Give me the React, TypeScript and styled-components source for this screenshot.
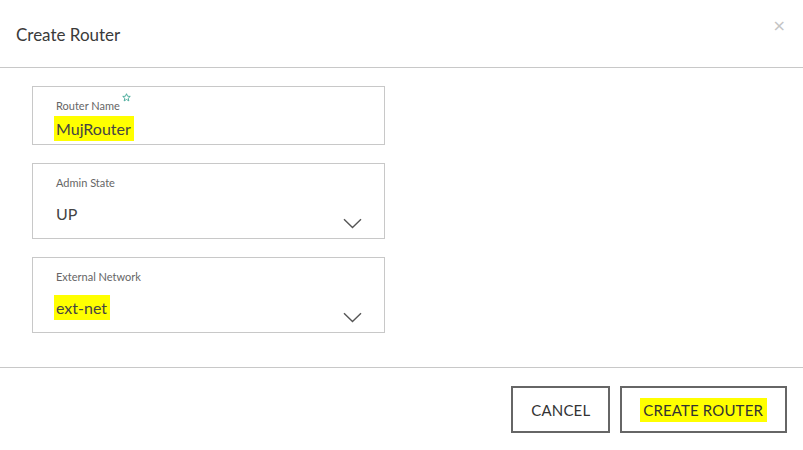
import styled, { createGlobalStyle } from 'styled-components';

const GlobalStyle = createGlobalStyle`
  html, body {
    margin: 0;
    padding: 0;
    background: #ffffff;
  }
  body {
    font-family: 'Lato', 'Open Sans', 'Liberation Sans', sans-serif;
    color: #333333;
  }
`;

interface FieldProps {
  label: string;
  value: string;
  required?: boolean;
  select?: boolean;
  marked?: boolean;
}

const Chevron = () => (
  <svg width="19" height="11" viewBox="0 0 19 11" fill="none">
    <path d="M1 1.2 L9.5 9.5 L18 1.2" stroke="#555" strokeWidth="1.4" />
  </svg>
);

const Star = () => (
  <svg width="9" height="9" viewBox="0 0 10 10" fill="none">
    <path
      d="M5 0.8 L6.2 3.6 L9.2 3.8 L6.9 5.8 L7.6 8.8 L5 7.2 L2.4 8.8 L3.1 5.8 L0.8 3.8 L3.8 3.6 Z"
      stroke="#2f9e8c"
      strokeWidth="0.9"
      strokeLinejoin="round"
    />
  </svg>
);

const FormField = ({ label, value, required, select, marked }: FieldProps) => (
  <FieldBox $select={select}>
    <Label>
      {label}
      {required && (
        <RequiredMark>
          <Star />
        </RequiredMark>
      )}
    </Label>
    <Value $select={select}>{marked ? <Highlight>{value}</Highlight> : value}</Value>
    {select && (
      <ChevronBox>
        <Chevron />
      </ChevronBox>
    )}
  </FieldBox>
);

const App = () => (
  <>
    <GlobalStyle />
    <Dialog>
      <Header>
        <Title>Create Router</Title>
        <Close>×</Close>
      </Header>
      <Body>
        <FormField label="Router Name" value="MujRouter" required marked />
        <FormField label="Admin State" value="UP" select />
        <FormField label="External Network" value="ext-net" select marked />
      </Body>
      <Footer>
        <Button>CANCEL</Button>
        <Button>
          <Highlight $tight>CREATE ROUTER</Highlight>
        </Button>
      </Footer>
    </Dialog>
  </>
);

export default App;

const Dialog = styled.div`
  width: 803px;
  height: 450px;
  display: flex;
  flex-direction: column;
  background: #ffffff;
`;
const Header = styled.div`
  height: 68px;
  border-bottom: 1px solid #c8c8c8;
  display: flex;
  justify-content: space-between;
  align-items: flex-start;
  padding: 0 17px 0 16px;
  box-sizing: border-box;
`;
const Title = styled.h1`
  margin: 24px 0 0;
  font-size: 17px;
  font-weight: 400;
  color: #3a3a3a;
  line-height: 22px;
`;
const Close = styled.span`
  margin-top: 18px;
  font-size: 16px;
  line-height: 16px;
  color: #c4c4c4;
  font-family: 'DejaVu Sans', sans-serif;
`;
const Body = styled.div`
  flex: 1;
  display: flex;
  flex-direction: column;
  gap: 18px;
  padding: 18px 32px 0;
`;
const FieldBox = styled.div<{ $select?: boolean }>`
  position: relative;
  width: 353px;
  height: ${(p) => (p.$select ? 76 : 59)}px;
  box-sizing: border-box;
  border: 1px solid #c8c8c8;
  padding: 7px 0 0 23px;
`;
const Label = styled.div`
  position: relative;
  display: inline-block;
  font-size: 11px;
  line-height: 14px;
  color: #666666;
`;
const RequiredMark = styled.span`
  position: absolute;
  right: -11px;
  top: -8px;
`;
const Value = styled.div<{ $select?: boolean }>`
  margin-top: ${(p) => (p.$select ? 14 : 6)}px;
  font-size: 16px;
  line-height: 20px;
  color: #444444;
`;
const Highlight = styled.span<{ $tight?: boolean }>`
  background: #ffff00;
  padding: ${(p) => (p.$tight ? '3px 4px 3px 3px' : '3px 3px 3px 2px')};
  margin-left: ${(p) => (p.$tight ? 0 : -2)}px;
`;
const ChevronBox = styled.div`
  position: absolute;
  right: 22px;
  bottom: 9px;
  display: flex;
`;
const Footer = styled.div`
  height: 83px;
  border-top: 1px solid #c8c8c8;
  display: flex;
  justify-content: flex-end;
  align-items: flex-start;
  gap: 10px;
  padding: 18px 16px 0 0;
  box-sizing: border-box;
`;
const Button = styled.button`
  height: 47px;
  padding: 0 18px;
  background: #ffffff;
  border: 2px solid #666666;
  border-radius: 0;
  font-family: 'Lato', 'Open Sans', 'Liberation Sans', sans-serif;
  font-size: 15px;
  color: #333333;
  letter-spacing: 0.15px;
  cursor: pointer;
`;
